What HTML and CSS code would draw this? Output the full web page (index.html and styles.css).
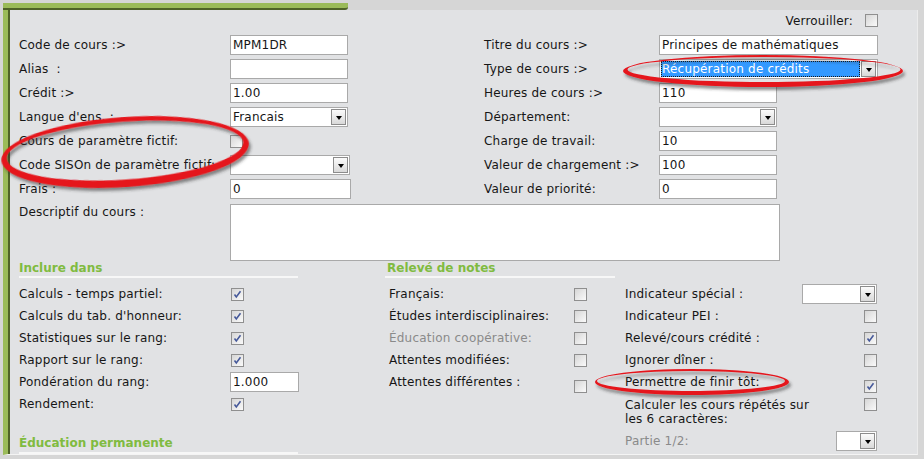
FILE: index.html
```html
<!DOCTYPE html>
<html lang="fr">
<head>
    <meta charset="UTF-8">
    <title>Cours</title>
    <link rel="stylesheet" href="styles.css">
</head>
<body>
    <div class="tabline"></div>
    <div class="panel">
        <div class="content">
            <div class="lock-row">
                <span>Verrouiller:</span>
                <span class="check"></span>
            </div>

            <!-- Course fields -->
            <div class="form-grid">
                <label>Code de cours :&gt;</label>
                <input class="text w118" type="text" value="MPM1DR">
                <label>Titre du cours :&gt;</label>
                <input class="text w219" type="text" value="Principes de mathématiques">

                <label>Alias &nbsp;:</label>
                <input class="text w118" type="text" value="">
                <label>Type de cours :&gt;</label>
                <div class="select w219 focused"><span class="value">Récupération de crédits</span><span class="drop"></span></div>

                <label>Crédit :&gt;</label>
                <input class="text w118" type="text" value="1.00">
                <label>Heures de cours :&gt;</label>
                <input class="text w118" type="text" value="110">

                <label>Langue d'ens. :</label>
                <div class="select w118"><span class="value">Francais</span><span class="drop"></span></div>
                <label>Département:</label>
                <div class="select w118"><span class="value"></span><span class="drop"></span></div>

                <label>Cours de paramètre fictif:</label>
                <span class="check"></span>
                <label>Charge de travail:</label>
                <input class="text w118" type="text" value="10">

                <label>Code SISOn de paramètre fictif:</label>
                <div class="select w120"><span class="value"></span><span class="drop"></span></div>
                <label>Valeur de chargement :&gt;</label>
                <input class="text w118" type="text" value="100">

                <label>Frais :</label>
                <input class="text w121" type="text" value="0">
                <label>Valeur de priorité:</label>
                <input class="text w118" type="text" value="0">

                <label class="top">Descriptif du cours :</label>
                <textarea class="desc"></textarea>
            </div>

            <div class="sections">
                <div class="col col-a">
                    <div class="section-title">Inclure dans</div>
                    <div class="row"><label>Calculs - temps partiel:</label><span class="check on"><svg viewBox="0 0 11 11"><path d="M2.5 5.5 L4.3 8 L8.5 2.2"/></svg></span></div>
                    <div class="row"><label>Calculs du tab. d'honneur:</label><span class="check on"><svg viewBox="0 0 11 11"><path d="M2.5 5.5 L4.3 8 L8.5 2.2"/></svg></span></div>
                    <div class="row"><label>Statistiques sur le rang:</label><span class="check on"><svg viewBox="0 0 11 11"><path d="M2.5 5.5 L4.3 8 L8.5 2.2"/></svg></span></div>
                    <div class="row"><label>Rapport sur le rang:</label><span class="check on"><svg viewBox="0 0 11 11"><path d="M2.5 5.5 L4.3 8 L8.5 2.2"/></svg></span></div>
                    <div class="row"><label>Pondération du rang:</label><input class="text w69 shift" type="text" value="1.000"></div>
                    <div class="row"><label>Rendement:</label><span class="check on"><svg viewBox="0 0 11 11"><path d="M2.5 5.5 L4.3 8 L8.5 2.2"/></svg></span></div>
                    <div class="section-title lower">Éducation permanente</div>
                </div>

                <div class="col col-b">
                    <div class="section-title">Relevé de notes</div>
                    <div class="row"><label>Français:</label><span class="check"></span></div>
                    <div class="row"><label>Études interdisciplinaires:</label><span class="check"></span></div>
                    <div class="row muted"><label>Éducation coopérative:</label><span class="check"></span></div>
                    <div class="row"><label>Attentes modifiées:</label><span class="check"></span></div>
                    <div class="row"><label>Attentes différentes :</label><span class="check low"></span></div>
                </div>

                <div class="col col-c">
                    <div class="section-title blank">&nbsp;</div>
                    <div class="row"><label>Indicateur spécial :</label><div class="select w75"><span class="value"></span><span class="drop"></span></div></div>
                    <div class="row"><label>Indicateur PEI :</label><span class="check"></span></div>
                    <div class="row"><label>Relevé/cours crédité :</label><span class="check on"><svg viewBox="0 0 11 11"><path d="M2.5 5.5 L4.3 8 L8.5 2.2"/></svg></span></div>
                    <div class="row"><label>Ignorer dîner :</label><span class="check"></span></div>
                    <div class="row"><label>Permettre de finir tôt:</label><span class="check on low"><svg viewBox="0 0 11 11"><path d="M2.5 5.5 L4.3 8 L8.5 2.2"/></svg></span></div>
                    <div class="row two-line"><label>Calculer les cours répétés sur les 6 caractères:</label><span class="check"></span></div>
                    <div class="row muted part"><label>Partie 1/2:</label><div class="select w41"><span class="value"></span><span class="drop"></span></div></div>
                </div>
            </div>
        </div>
    </div>

    <!-- red annotation marks drawn over the form -->
    <svg class="marks" width="924" height="459" viewBox="0 0 924 459">
        <defs>
            <filter id="shadow" x="-10%" y="-60%" width="120%" height="220%">
                <feDropShadow dx="2" dy="3" stdDeviation="1.6" flood-color="#333" flood-opacity="0.55"/>
            </filter>
        </defs>
        <g fill="#e5141b" fill-rule="evenodd" filter="url(#shadow)">
            <path d="M623 71 a140 16 0 1 0 280 0 a140 16 0 1 0 -280 0 Z M627.5 69.5 a136.5 12.5 0 1 0 273 0 a136.5 12.5 0 1 0 -273 0 Z"/>
            <path transform="rotate(-4 125 151)" d="M1 152 a124 35 0 1 0 248 0 a124 35 0 1 0 -248 0 Z M6.5 150.5 a118.5 29 0 1 0 237 0 a118.5 29 0 1 0 -237 0 Z"/>
            <path d="M595 382 a97 13 0 1 0 194 0 a97 13 0 1 0 -194 0 Z M597 381 a94 10 0 1 0 188 0 a94 10 0 1 0 -188 0 Z"/>
        </g>
    </svg>
</body>
</html>
```

FILE: styles.css
```css
body {
    margin: 0;
    width: 924px;
    height: 459px;
    overflow: hidden;
    position: relative;
    background: #d6d6d6;
    font-family: "DejaVu Sans", Verdana, sans-serif;
    font-size: 12px;
    line-height: 14px;
    letter-spacing: 0.2px;
    color: #161616;
}

/* Green tab strip on top */
.tabline {
    margin: 3px 0 0 3px;
    width: 345px;
    height: 5px;
    background: #9bbb59;
    border-bottom: 2px solid #4f6228;
    border-bottom-right-radius: 3px;
}

.panel {
    margin-left: 3px;
    width: 915px;
    height: 445px;
    box-sizing: border-box;
    background: #e1e2e4;
    border-left: 5px solid #9bbb59;
    border-right: 1px solid #ececec;
    border-bottom: 1px solid #f4f4f4;
    box-shadow: inset 2px 0 0 #4f6228;
    padding-left: 11px;
    overflow: hidden;
}

.content {
    width: 861px;
}

.lock-row {
    display: flex;
    justify-content: flex-end;
    align-items: center;
    gap: 12px;
    height: 13px;
    padding: 4px 2px 0 0;
    margin-bottom: 8px;
}

/* Form fields */
.form-grid {
    display: grid;
    grid-template-columns: 211px 254px 175px 221px;
    grid-template-rows: repeat(7, 20px) 57px;
    row-gap: 4px;
    align-items: center;
}

.form-grid label.top {
    align-self: start;
    padding-top: 2px;
}

label {
    white-space: nowrap;
}

.text {
    box-sizing: border-box;
    height: 20px;
    border: 1px solid #a9a9a9;
    background: #fff;
    font: inherit;
    letter-spacing: inherit;
    color: inherit;
    padding: 0 2px;
    margin: 0;
    outline: none;
    justify-self: start;
}

.w41 { width: 41px; }
.w69 { width: 69px; }
.w75 { width: 75px; }
.w118 { width: 118px; }
.w120 { width: 120px; }
.w121 { width: 121px; }
.w219 { width: 219px; }

.desc {
    grid-column: 2 / 5;
    align-self: start;
    width: 550px;
    height: 57px;
    box-sizing: border-box;
    margin: 1px 0 0 0;
    border: 1px solid #a9a9a9;
    background: #fff;
    resize: none;
    font: inherit;
}

.select {
    display: flex;
    box-sizing: border-box;
    height: 20px;
    border: 1px solid #a9a9a9;
    background: #fff;
    justify-self: start;
    flex: none;
}

.select .value {
    flex: 1;
    padding-left: 2px;
    line-height: 18px;
    white-space: nowrap;
    overflow: hidden;
}

.select.focused .value {
    margin: 1px 0 1px 1px;
    line-height: 16px;
    padding-left: 1px;
    background: #3399ff;
    color: #fff;
    outline: 1px dotted #1a1a1a;
    outline-offset: -1px;
}

.drop {
    width: 15px;
    height: 16px;
    margin: 1px;
    box-sizing: border-box;
    border: 1px solid #8c8c8c;
    background: linear-gradient(#fbfbfb, #d9d9d9);
    display: flex;
    align-items: center;
    justify-content: center;
    flex: none;
}

.drop::after {
    content: "";
    border-left: 3.5px solid transparent;
    border-right: 3.5px solid transparent;
    border-top: 4px solid #000;
    margin-top: 1px;
}

.check {
    display: inline-flex;
    width: 13px;
    height: 13px;
    box-sizing: border-box;
    border: 1px solid #8f8f8f;
    background: linear-gradient(135deg, #d6d6d6, #fafafa);
    flex: none;
}

.form-grid .check {
    justify-self: start;
}

.check svg {
    width: 11px;
    height: 11px;
}

.check svg path {
    fill: none;
    stroke: #46599a;
    stroke-width: 1.6;
}

.check.low {
    margin-top: 8px;
}

/* Lower sections */
.sections {
    display: flex;
    margin-top: 1px;
}

.col-a { width: 366px; }
.col-b { width: 240px; }
.col-c { width: 253px; }

.section-title {
    font-weight: bold;
    letter-spacing: 0;
    color: #80bb40;
    line-height: 14px;
    padding-bottom: 1px;
    border-bottom: 2px solid #f7f7f7;
    margin-bottom: 5px;
}

.col-a .section-title {
    width: 279px;
}

.col-a .section-title.lower {
    margin-top: 21px;
    padding-bottom: 2px;
}

.col-b .section-title {
    width: 228px;
    padding-left: 2px;
}

.section-title.blank {
    border-bottom-color: transparent;
}

.row {
    display: flex;
    align-items: center;
    height: 22px;
}

.col-a .row label {
    width: 212px;
}

.col-a .row .shift {
    margin-left: -1px;
}

.col-b .row {
    padding-left: 4px;
}

.col-b .row label {
    width: 185px;
}

.col-c .row .check,
.col-c .row .select {
    margin-left: auto;
    margin-right: 1px;
}

.row.muted label {
    color: #8a8a8a;
}

.row.two-line {
    align-items: flex-start;
    height: auto;
    padding-top: 5px;
}

.row.two-line label {
    white-space: normal;
    width: 200px;
}

.row.part {
    margin-top: 4px;
}

.marks {
    position: absolute;
    top: 0;
    left: 0;
    pointer-events: none;
}
```
